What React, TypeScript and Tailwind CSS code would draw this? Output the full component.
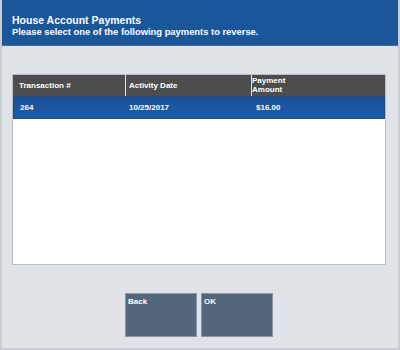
export default function App() {
  const font = { fontFamily: '"Liberation Sans", Arial, sans-serif' };
  return (
    <div
      className="w-[400px] h-[350px] bg-[#dfe2e7] border-l-2 border-r-2 border-b-2 border-[#c9cdd3] flex flex-col overflow-hidden"
      style={font}
    >
      <div className="h-[46px] bg-[#1a569a] px-[10px] pt-[14px] text-white font-bold leading-[12px] border-b border-[#476c9b]">
        <div className="text-[10.5px]">House Account Payments</div>
        <div className="text-[9.4px]">Please select one of the following payments to reverse.</div>
      </div>

      <div className="mt-[28px] ml-[10px] w-[374px] h-[191px] bg-white border border-[#b9bec6] flex flex-col">
        <div className="h-[21px] bg-[#4d4d4d] flex text-white text-[8px] font-bold">
          <div className="w-[113px] pl-[6px] pt-[5px] border-r border-[#e0e0e0]">Transaction #</div>
          <div className="w-[126px] pl-[3px] pt-[5px] border-r border-[#e0e0e0]">Activity Date</div>
          <div className="flex-1 pt-[1px] leading-[9px]">
            <div>Payment</div>
            <div>Amount</div>
          </div>
        </div>
        <div className="h-[23px] bg-gradient-to-b from-[#1a5097] to-[#1b5cab] border border-[#2b4a75] flex items-center text-white text-[8px] font-bold">
          <div className="w-[112px] pl-[6px]">264</div>
          <div className="w-[126px] pl-[3px]">10/25/2017</div>
          <div className="flex-1 pl-[4px]">$16.00</div>
        </div>
      </div>

      <div className="mt-[28px] flex gap-[4px] ml-[123px]">
        <button className="w-[72px] h-[44px] bg-[#53677c] border border-[#8a97a5] text-white text-[8px] font-bold flex items-start pl-[2px] pt-[2px]">
          Back
        </button>
        <button className="w-[72px] h-[44px] bg-[#53677c] border border-[#8a97a5] text-white text-[8px] font-bold flex items-start pl-[2px] pt-[2px]">
          OK
        </button>
      </div>
    </div>
  );
}
